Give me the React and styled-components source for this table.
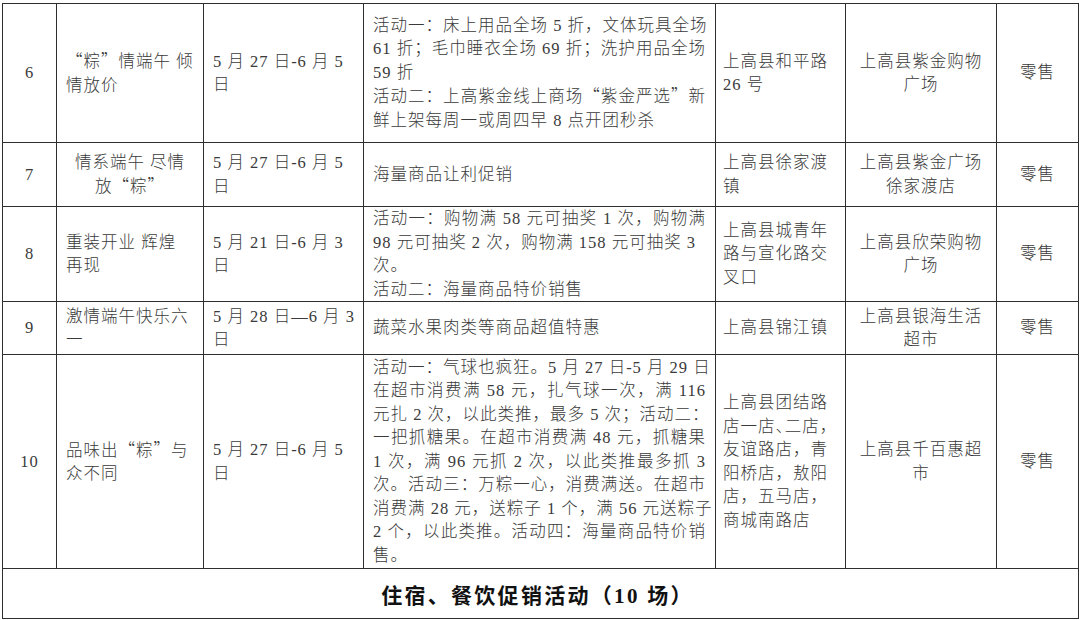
import React from 'react';
import styled, { createGlobalStyle } from 'styled-components';

const GlobalStyle = createGlobalStyle`
  html, body {
    margin: 0;
    padding: 0;
    background: #ffffff;
  }
  body {
    font-family: "Liberation Serif", "Noto Sans CJK SC", serif;
  }
`;

const Page = styled.div`
  width: 1080px;
  height: 620px;
  padding: 3px 0 0 2px;
  box-sizing: border-box;
  overflow: hidden;
`;

const Table = styled.table`
  width: 1076px;
  table-layout: fixed;
  border-collapse: collapse;
  color: #3a3a3a;
  font-size: 16.5px;
  font-weight: 300;
  letter-spacing: 1px;
`;

const Col = styled.col`
  width: ${p => p.$w}px;
`;

const Row = styled.tr`
  height: ${p => p.$h}px;
`;

const Cell = styled.td`
  border: 1px solid #2e2e2e;
  padding: 0 ${p => p.$pad ?? 8}px;
  vertical-align: middle;
  text-align: ${p => p.$align || 'left'};
  line-height: 23.5px;
`;

const Line = styled.span`
  display: block;
  white-space: nowrap;
  text-align-last: ${p => (p.$fill ? 'justify' : 'auto')};
  font-feature-settings: ${p => (p.$tight ? '"halt"' : 'normal')};
`;

// full-width CJK quotation marks, as in the document
const Quote = styled.span`
  font-family: "Noto Sans CJK SC", sans-serif;
`;

const Title = styled.td`
  border: 1px solid #2e2e2e;
  text-align: center;
  vertical-align: middle;
  color: #111;
  font-size: 21px;
  font-weight: 700;
  letter-spacing: 2.3px;
  padding: 0 6px 0 0;
`;

const cols = [54, 147, 160, 352, 130, 151, 82];

const rows = [
  {
    no: '6',
    h: 139,
    title: ['“粽”情端午 倾', '情放价'],
    date: ['5 月 27 日-6 月 5', '日'],
    content: [
      ['活动一：床上用品全场 5 折，文体玩具全场', '61 折；毛巾睡衣全场 69 折；洗护用品全场', '59 折'],
      ['活动二：上高紫金线上商场“紫金严选”新', '鲜上架每周一或周四早 8 点开团秒杀'],
    ],
    addr: ['上高县和平路', '26 号'],
    name: ['上高县紫金购物', '广场'],
  },
  {
    no: '7',
    h: 64,
    title: ['情系端午 尽情', '放“粽”'],
    titleAlign: 'center',
    date: ['5 月 27 日-6 月 5', '日'],
    content: [['海量商品让利促销']],
    addr: ['上高县徐家渡', '镇'],
    name: ['上高县紫金广场', '徐家渡店'],
  },
  {
    no: '8',
    h: 94,
    title: ['重装开业 辉煌', '再现'],
    date: ['5 月 21 日-6 月 3', '日'],
    content: [
      ['活动一：购物满 58 元可抽奖 1 次，购物满', ''],
      ['98 元可抽奖 2 次，购物满 158 元可抽奖 3'],
      ['次。'],
      ['活动二：海量商品特价销售'],
    ],
    addr: ['上高县城青年', '路与宣化路交', '叉口'],
    name: ['上高县欣荣购物', '广场'],
  },
  {
    no: '9',
    h: 53,
    title: ['激情端午快乐六', '一'],
    date: ['5 月 28 日—6 月 3', '日'],
    content: [['蔬菜水果肉类等商品超值特惠']],
    addr: ['上高县锦江镇'],
    name: ['上高县银海生活', '超市'],
  },
  {
    no: '10',
    h: 214,
    title: ['品味出“粽”与', '众不同'],
    date: ['5 月 27 日-6 月 5', '日'],
    content: [
      [
        '活动一：气球也疯狂。5 月 27 日-5 月 29 日',
        '在超市消费满 58 元，扎气球一次，满 116',
        '元扎 2 次，以此类推，最多 5 次；活动二：',
        '一把抓糖果。在超市消费满 48 元，抓糖果',
        '1 次，满 96 元抓 2 次，以此类推最多抓 3',
        '次。活动三：万粽一心，消费满送。在超市',
        '消费满 28 元，送粽子 1 个，满 56 元送粽子',
        '2 个，以此类推。活动四：海量商品特价销',
        '售。',
      ],
    ],
    addr: ['上高县团结路', '店一店、二店，', '友谊路店，青', '阳桥店，敖阳', '店，五马店，', '商城南路店'],
    name: ['上高县千百惠超', '市'],
  },
];

const withQuotes = text =>
  text.split(/([“”])/).map((part, i) =>
    part === '“' || part === '”' ? <Quote key={i}>{part}</Quote> : part
  );

const Lines = ({ lines }) =>
  lines.map((text, i) => (
    <Line key={i} $tight={text.includes('、')}>
      {withQuotes(text)}
    </Line>
  ));

// last line of each paragraph stays ragged, the others are justified;
// an empty string only marks that the line before it is justified
const Paragraphs = ({ paras }) =>
  paras.map((lines, p) =>
    lines.map((text, i) =>
      text === '' ? null : (
        <Line key={`${p}-${i}`} $fill={i < lines.length - 1}>
          {withQuotes(text)}
        </Line>
      )
    )
  );

export default function App() {
  return (
    <>
      <GlobalStyle />
      <Page>
        <Table>
          <colgroup>
            {cols.map((w, i) => (
              <Col key={i} $w={w} />
            ))}
          </colgroup>
          <tbody>
            {rows.map(r => (
              <Row key={r.no} $h={r.h}>
                <Cell $align="center" $pad={2}>{r.no}</Cell>
                <Cell $align={r.titleAlign} $pad={9}>
                  <Lines lines={r.title} />
                </Cell>
                <Cell $pad={9}>
                  <Lines lines={r.date} />
                </Cell>
                <Cell $pad={9}>
                  <Paragraphs paras={r.content} />
                </Cell>
                <Cell $pad={7}>
                  <Lines lines={r.addr} />
                </Cell>
                <Cell $align="center" $pad={4}>
                  <Lines lines={r.name} />
                </Cell>
                <Cell $align="center" $pad={2}>零售</Cell>
              </Row>
            ))}
            <Row $h={50}>
              <Title colSpan={7}>住宿、餐饮促销活动（10 场）</Title>
            </Row>
          </tbody>
        </Table>
      </Page>
    </>
  );
}
